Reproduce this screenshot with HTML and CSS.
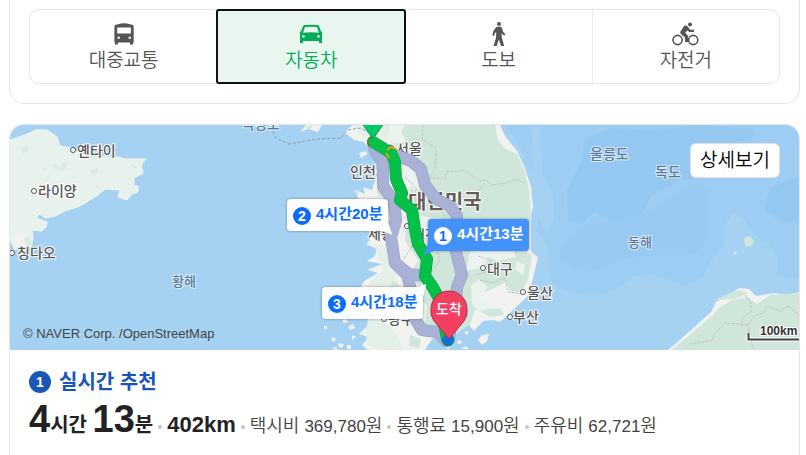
FILE: index.html
```html
<!DOCTYPE html>
<html lang="ko">
<head>
    <meta charset="UTF-8">
    <meta name="viewport" content="width=device-width, initial-scale=1.0">
    <title>길찾기</title>
    <link rel="stylesheet" href="styles.css">
</head>
<body>
    <section class="card search-card">
        <div class="tabs">
            <button type="button" class="tab">
                <svg class="tab-icon" viewBox="0 0 28 24" aria-hidden="true">
                    <path fill="currentColor" fill-rule="evenodd" d="M8 2.2Q14 .4 20 2.2L22.4 2.8Q23.7 3.3 23.7 5V20.4H23v2h-3v-2H8v2H5v-2h-.6V5Q4.4 3.3 5.7 2.8ZM7.2 5.4V11.500H20.900V5.400ZM8.700 14.400a1.300 1.300 0 1 0 .01 0ZM19.700 14.400a1.300 1.300 0 1 0 .01 0Z"/>
                </svg>
                <span>대중교통</span>
            </button>
            <button type="button" class="tab active">
                <svg class="tab-icon" viewBox="0 0 28 24" aria-hidden="true">
                    <path fill="currentColor" fill-rule="evenodd" d="M7.5 3Q14 2.4 20.5 3Q21.7 3.2 22.1 4.3L24 9.4L25.4 9.7V11H24.700L25 12.500V21H22V19H6V21H3V12.500L3.300 11H2.600V9.700L4 9.400L5.900 4.300Q6.300 3.200 7.500 3ZM8 5L6 10.700Q14 9.700 22 10.700L20 5Q14 4.500 8 5ZM6.500 13a1.400 1.400 0 1 0 .01 0ZM21.500 13a1.400 1.400 0 1 0 .01 0Z"/>
                </svg>
                <span>자동차</span>
            </button>
            <button type="button" class="tab">
                <svg class="tab-icon" viewBox="0 0 28 24" aria-hidden="true">
                    <circle cx="14" cy="2" r="2" fill="currentColor"/>
                    <path fill="currentColor" d="M12.300 4.800H15.500Q16.800 4.900 17.100 6.300L18 9.800L20.300 12L19.300 13.700L16.600 11.300L16.800 15.500L19.200 24H16.100L13.800 17.500L11.700 24H8.500L11 16L11.200 10.400L10 10.800L9 14L7.400 13.400L8.300 9.100L10.800 5.700Q11.400 4.900 12.300 4.800Z"/>
                </svg>
                <span>도보</span>
            </button>
            <button type="button" class="tab">
                <svg class="tab-icon" viewBox="0 0 28 24" aria-hidden="true">
                    <g fill="none" stroke="currentColor" stroke-width="1.6">
                        <circle cx="5.6" cy="18" r="4.6"/>
                        <circle cx="21.2" cy="18" r="4.6"/>
                    </g>
                    <circle cx="18" cy="2.4" r="2" fill="currentColor"/>
                    <path fill="currentColor" d="M12.500 3.600Q14.400 3 15.600 4.500L18.300 7.800H22V10H17.400L15.400 8.400L13.200 10.700L15.400 13Q16 13.700 16 14.500V20H13V15.500L9 12.300Q7.800 10.800 8.600 9.300Z"/>
                </svg>
                <span>자전거</span>
            </button>
        </div>
    </section>

    <section class="card route-card">
        <div class="map">
            <svg class="map-image" viewBox="10 125 789 225" preserveAspectRatio="xMidYMid slice" aria-hidden="true">
                <rect x="0" y="100" width="830" height="280" fill="#a5d2f3"/>

                <!-- deeper water, east sea -->
                <path fill="#9dcdf2" d="M505 125L519 145L528 165L538 178L541 200L536 230L548 245L550 280L565 291L590 295L610 292L635 276L655 275L685 286L703 277L710 262L724 246L725 225L733 212L745 220L752 233L770 245L778 258L777 275L799 279V125Z"/>
                <path fill="#a5d2f3" d="M532 125H540L543 175L553 195L554 220L546 235L534 205Z"/>
                <path fill="#95c8f1" d="M585 140L610 128L650 131L690 126L752 128L754 137L730 145L700 160L705 178L680 180L652 195L643 212L630 224L615 223L594 212L583 223L568 220L567 190L580 165ZM770 188L799 176V220L782 222L764 210Z"/>
                <path fill="#99caf1" d="M558 258Q566 235 592 222Q640 225 680 190Q711 170 710 210Q708 240 700 253L660 254L620 260Q585 280 558 258Z"/>

                <!-- Shandong -->
                <path fill="#e8f2ed" stroke="#f4f5f4" stroke-width="1" d="M10 140L25 135L36 130L47 130L57 137L60 146L72 148L80 154L90 157L118 157L125 159H146L141 165L143 173L134 178V186H138V192L132 194L127 200L118 197L120 190L105 189L98 195L85 203L80 206L65 211L55 216L45 218L40 214L36 218L47 222L46 227L42 231L32 230L33 238L31 246L22 249L15 250L10 240Z"/>
                <path fill="#d8ebdf" d="M21 148l6-2 2 4-6 4zM52 165l5-1 1 6-5-2zM62 163l7-1-4 8-6 1zM90 170l7-2 2 4-6 3zM130 164l7 3-3 2zM24 239l5-2 4 8-5 2zM43 167l5 1-3 3z"/>
                <path fill="#f2f2f1" d="M14 238l7-8 4 12-3 7-8-4z"/>

                <!-- Japan -->
                <path fill="#f2f2f1" d="M668 350L690 331L711 312L716 302L730 294L739 288L749 289L756 296L775 293L786 295L799 292V350Z"/>
                <path fill="#d0e6db" d="M671 350L692 333L713 315L718 309L732 300L747 297L757 304L770 295L799 293V350ZM715 300L732 292L740 290L748 293L735 299Z"/>
                <path fill="#d0e6db" d="M745 237l5-1 4 5-2 5-6 1-2-5zM734 251l3 1-1 3-3-1z"/>
                <path class="border-line" d="M684 350L690 344L713 340L714 335L725 323L748 325L752 345L755 350M745 295L751 303V312L743 318L741 325L749 324L754 316L764 313L767 306L780 311L788 306L799 315"/>

                <!-- Korean peninsula -->
                <path fill="#f2f2f1" d="M306 125L300 132L308 129L318 132L322 125H353L344 132L354 140L364 142L371 153L379 161L377 175L372 190L363 187L365 194L355 190L358 198L367 208L370 240L366 244L377 249L374 257L367 261L382 264L367 270L378 273L364 281L359 291L355 303L365 309L362 319L375 319L359 334L369 337L362 345L368 350H425L432 339L442 337L448 350L456 334L468 324L474 331L483 321L493 320L500 322L512 311L527 297L532 282L535 270L538 257L531 252L531 215L533 207L531 187L525 168L517 151L505 136L500 125Z"/>
                <path fill="#e3f0e8" d="M353 125H390L386 145L368 142L358 132ZM380 195L390 190L398 230L382 240L372 225ZM374 245L390 245L398 282L390 305L370 307L361 295L370 282L384 270ZM368 315L390 325L405 350H380L366 344Z"/>
                <path fill="#d0e6db" d="M386 125H495L498 140L505 149L517 154L525 171L529 190L531 210L527 252L532 255L528 280L521 292L511 292L506 282L492 289L478 295L480 308L501 309L504 315L490 317L475 309L470 325L458 332L448 330L430 335L412 323L408 303L423 292L410 275L418 260L405 241L406 227L418 207L409 197L412 180L399 150L392 143Z"/>
                <path fill="#eaf3ee" d="M388 125h17l-4 8 5 8-12 3-6-6zM402 165l10 2 4 9 12 3-3 9-11 2-6-8zM414 214l12 3 15 1-8 14-15 6-6-12zM474 247l16-5 12 7 10-5 4 13-18 4-9-4-6 10-16 4 2-17zM471 285l8-5 8 6-4 13 9 8-12 5-8-8zM418 298l9 7-2 18-7-7zM517 261l8 4-2 10-8-6z"/>
                <path fill="#d0e6db" d="M376 188l8 6-5 3zM356 189l3 2-1 4-3-2zM305 127l8-2-3 5zM392 280l7 5 4 11-6 10-9-2zM394 250l5 10-2 10-6-9zM410 335l11 4-2 9-10-2z"/>
                <g fill="#f2f2f1">
                    <path d="M359 153l7-2 1 3-6 4zM374 171l4-2 1 3-4 2zM478 340l4-5 7-1-2 7-5 4zM464 332l5-1-2 4zM457 341l3-1 2 3-4 1zM460 349h9l-3-3z"/>
                    <path d="M342 320l4-1 2 3-4 1zM348 327l5-3 2 4-5 2zM331 339l3-2 2 3-3 2zM339 343l5 1-2 4-4-2zM352 335l4 2-4 3zM332 349l4-2 2 3zM324 326h3v3h-3zM347 345h4v4h-4z"/>
                </g>
                <path class="border-line" d="M423 125L422 139L436 149L435 169L430 178L445 179L447 171L456 172L464 170L470 174L480 181L486 180L492 185L506 183L516 179L525 183M485 183L476 194L466 193L459 202L442 203M405 177L416 188L415 207L404 218M442 210L448 228L435 245L440 260L431 273M391 218L406 232M402 262L416 240M480 280L493 283L505 278L508 292L523 294M478 256L490 260L490 271L476 275"/>
                <path class="sea-line" d="M271 127L276 138L288 144L318 139L341 138L347 130L361 128L370 133"/>

                <g class="city-dots">
                    <circle cx="73" cy="150" r="2.5"/>
                    <circle cx="34" cy="191" r="2.5"/>
                    <circle cx="12" cy="253" r="2.5"/>
                    <circle cx="390" cy="149" r="4"/>
                    <circle cx="407" cy="226" r="2.5"/>
                    <circle cx="483" cy="268" r="2.5"/>
                    <circle cx="523" cy="292" r="2.5"/>
                    <circle cx="510" cy="317" r="2.5"/>
                    <circle cx="384" cy="319" r="2.5"/>
                </g>
                <g class="map-label">
                    <text x="77" y="156">옌타이</text>
                    <text x="38" y="196">라이양</text>
                    <text x="17" y="258">칭다오</text>
                    <text x="350" y="177">인천</text>
                    <text x="396" y="154">서울</text>
                    <text x="368" y="239">세종</text>
                    <text x="412" y="240">대전</text>
                    <text x="487" y="274">대구</text>
                    <text x="527" y="298">울산</text>
                    <text x="513" y="322">부산</text>
                    <text x="388" y="324">광주</text>
                    <text class="country" x="408" y="209">대한민국</text>
                </g>
                <g class="map-label water">
                    <text x="241" y="129">백령도</text>
                    <text x="590" y="159">울릉도</text>
                    <text x="655" y="177">독도</text>
                    <text class="sea" x="628" y="247">동해</text>
                    <text class="sea" x="172" y="286">황해</text>
                </g>

                <!-- alternative routes -->
                <defs>
                    <path id="route-east" d="M392 154L411 161L421 169L425 185L436 199L450 206L457 216L456 252L462 275L457 287L456 302L449 338"/>
                    <path id="route-west" d="M373 144L376 153L383 162L383 186L394 202L396 220L391 237L395 263L407 275L411 290L411 312L422 330L437 332L446 341"/>
                    <path id="route-link" d="M396 264L409 274L424 276"/>
                    <path id="route-main" d="M373 142L391 153L395 162L396 179L402 193L400 200L412 210L415 230L418 244L427 259L425 276L432 286L440 300L447 339"/>
                </defs>
                <g class="line-edge">
                    <use href="#route-east"/>
                    <use href="#route-west"/>
                    <use href="#route-link"/>
                </g>
                <g class="line-alt">
                    <use href="#route-east"/>
                    <use href="#route-west"/>
                    <use href="#route-link"/>
                </g>

                <!-- selected route -->
                <use class="line-main-edge" href="#route-main"/>
                <use class="line-main" href="#route-main"/>
                <path d="M371 136Q366 140 369 146" fill="none" stroke="#a4512a" stroke-width="1"/>
                <path d="M387 150Q391 145 396 149M386 153L389 158" fill="none" stroke="#f39c12" stroke-width="2"/>

                <!-- start and arrival pins -->
                <path d="M359 119H387L373 139Z" fill="#00c967" stroke="#129a58" stroke-width="1"/>
                <circle cx="448" cy="340" r="6" fill="#0b70dd" stroke="#16945c" stroke-width="1"/>
                <path d="M449 339L434 321Q430 315 431 309A18 18 0 0 1 467 309Q468 315 464 321Z" fill="#f33f60" stroke="#a92f49" stroke-width="1"/>
                <text class="pin-text" x="449" y="314">도착</text>

                <text class="scale-text" x="760" y="335">100km</text>
                <path d="M748.5 333V339.5H799" fill="none" stroke="#fff" stroke-width="4"/>
                <path d="M748.5 333V339.5H799" fill="none" stroke="#444" stroke-width="2"/>
            </svg>

            <button type="button" class="callout callout-2"><span class="callout-num">2</span>4시간20분</button>
            <button type="button" class="callout callout-3"><span class="callout-num">3</span>4시간18분</button>
            <button type="button" class="callout callout-1"><span class="callout-num">1</span>4시간13분</button>

            <button type="button" class="detail-btn">상세보기</button>
            <span class="copyright">© NAVER Corp. /OpenStreetMap</span>
        </div>

        <div class="summary">
            <h2 class="summary-title"><span class="rank">1</span>실시간 추천</h2>
            <ul class="summary-info">
                <li class="time"><strong>4</strong>시간 <strong>13</strong>분</li>
                <li class="distance">402km</li>
                <li>택시비 <span class="price">369,780</span>원</li>
                <li>통행료 <span class="price">15,900</span>원</li>
                <li>주유비 <span class="price">62,721</span>원</li>
            </ul>
        </div>
    </section>
</body>
</html>
```
FILE: styles.css
```css
* {
    box-sizing: border-box;
}

body {
    margin: 0;
    padding: 0 6px 0 9px;
    background: #fff;
    color: #424242;
    font-family: "Liberation Sans", "Noto Sans CJK KR", sans-serif;
    overflow: hidden;
}

button {
    font-family: inherit;
    cursor: pointer;
}

.card {
    border: 1px solid #e6e6e6;
    background: #fff;
}

.search-card {
    border-top: 0;
    border-radius: 0 0 15px 15px;
    padding: 9px 19px 19px;
}

.tabs {
    display: grid;
    grid-template-columns: repeat(4, 1fr);
    border: 1px solid #e6e6e6;
    border-radius: 10px;
}

.tab {
    display: flex;
    flex-direction: column;
    align-items: center;
    gap: 3px;
    padding: 12px 0 10px;
    border: 0;
    border-left: 1px solid #ececec;
    background: none;
    color: #555;
    font-size: 19px;
    font-weight: 350;
    line-height: 24px;
}

.tab:first-child {
    border-left: 0;
}

.tab.active {
    background: #e9f6f0;
    color: #03ab5b;
    border-radius: 2px;
    outline: 2px solid #101010;
    outline-offset: -1px;
    z-index: 1;
}

.tab-icon {
    width: 28px;
    height: 24px;
}

.route-card {
    margin-top: 20px;
    border-bottom: 0;
    border-radius: 15px 15px 0 0;
    overflow: hidden;
}

/* map */
.map {
    position: relative;
    height: 225px;
    overflow: hidden;
}

.map-image {
    display: block;
    width: 100%;
    height: 100%;
}

.border-line {
    fill: none;
    stroke: #b9c9c0;
    stroke-width: 1;
    stroke-dasharray: 3 1;
}

.sea-line {
    fill: none;
    stroke: #839bad;
    stroke-width: 1;
    stroke-dasharray: 3 2;
}

.city-dots {
    fill: #fff;
    stroke: #555;
    stroke-width: 1;
}

.map-label {
    font-size: 14px;
    font-weight: 500;
    fill: #555;
    stroke: #fff;
    stroke-width: 2px;
    stroke-linejoin: round;
    paint-order: stroke;
}

.map-label .country {
    font-size: 20px;
    font-weight: 700;
    fill: #665c55;
}

.map-label.water {
    fill: #5577a0;
    stroke: #dcecf8;
}

.map-label .sea {
    font-size: 13px;
}

.line-edge,
.line-alt,
.line-main,
.line-main-edge {
    fill: none;
    stroke-linecap: round;
    stroke-linejoin: round;
}

.line-edge {
    stroke: #949dc0;
    stroke-width: 12px;
}

.line-alt {
    stroke: #a9b2d6;
    stroke-width: 11px;
}

.line-main-edge {
    stroke: #0b9b42;
    stroke-width: 12px;
}

.line-main {
    stroke: #05c046;
    stroke-width: 11px;
}

.pin-text {
    font-size: 14px;
    font-weight: 500;
    fill: #fff;
    text-anchor: middle;
}

.scale-text {
    font-size: 12px;
    font-weight: 700;
    fill: #333;
    stroke: #fff;
    stroke-width: 2px;
    paint-order: stroke;
}

.callout {
    position: absolute;
    display: flex;
    align-items: center;
    gap: 5px;
    height: 32px;
    padding: 0 6px 5px;
    border: 0;
    border-radius: 4px;
    background: rgba(255, 255, 255, 0.95);
    box-shadow: 0 0 3px rgba(0, 0, 0, 0.4);
    color: #0a6cff;
    font-size: 15px;
    font-weight: 700;
    white-space: nowrap;
}

.callout-num {
    width: 18px;
    height: 18px;
    margin-top: 6px;
    border-radius: 50%;
    background: #0a6cff;
    color: #fff;
    font-size: 14px;
    line-height: 18px;
    text-align: center;
}

.callout::after {
    content: "";
    position: absolute;
    width: 10px;
    height: 12px;
    background: inherit;
}

.callout-1 {
    left: 418px;
    top: 94px;
    background: #4391fb;
    color: #fff;
}

.callout-1 .callout-num {
    background: #fff;
    color: #0a6cff;
}

.callout-1::after {
    left: -4px;
    bottom: -4px;
    clip-path: polygon(40% 0, 100% 67%, 0 100%);
}

.callout-2 {
    left: 277px;
    top: 74px;
}

.callout-2::after {
    right: -4px;
    bottom: -4px;
    clip-path: polygon(60% 0, 100% 100%, 0 67%);
}

.callout-3 {
    left: 312px;
    top: 162px;
}

.callout-3::after {
    right: -3px;
    top: -3px;
    clip-path: polygon(0 25%, 100% 0, 70% 100%);
}

.detail-btn {
    position: absolute;
    top: 18px;
    right: 19px;
    height: 35px;
    padding: 0 9px;
    border: 1px solid #dfe3e6;
    border-radius: 6px;
    background: #fff;
    color: #000;
    font-size: 19px;
    font-weight: 350;
    line-height: 30px;
}

.copyright {
    position: absolute;
    left: 13px;
    bottom: 7px;
    color: #444;
    font-size: 13px;
    line-height: 18px;
}

/* route summary */
.summary {
    padding: 20px 19px;
}

.summary-title {
    display: flex;
    align-items: center;
    gap: 8px;
    margin: 0;
    color: #1a55b8;
    font-size: 20px;
    font-weight: 700;
    line-height: 24px;
}

.rank {
    width: 22px;
    height: 22px;
    border-radius: 50%;
    background: #1a55b8;
    color: #fff;
    font-size: 14px;
    line-height: 22px;
    text-align: center;
}

.summary-info {
    display: flex;
    align-items: baseline;
    margin: 0;
    padding: 0;
    list-style: none;
    font-size: 18px;
    font-weight: 350;
    line-height: 50px;
    white-space: nowrap;
}

.summary-info li + li::before {
    content: "";
    display: inline-block;
    width: 4px;
    height: 4px;
    margin: 0 5px;
    border-radius: 50%;
    background: #c4c4c4;
    vertical-align: 3px;
}

.summary-info .time {
    color: #222;
    font-size: 20px;
    font-weight: 700;
}

.time strong {
    font-size: 38px;
}

.summary-info .distance {
    color: #222;
    font-size: 22px;
    font-weight: 700;
}

.price {
    font-size: 17px;
}
```
